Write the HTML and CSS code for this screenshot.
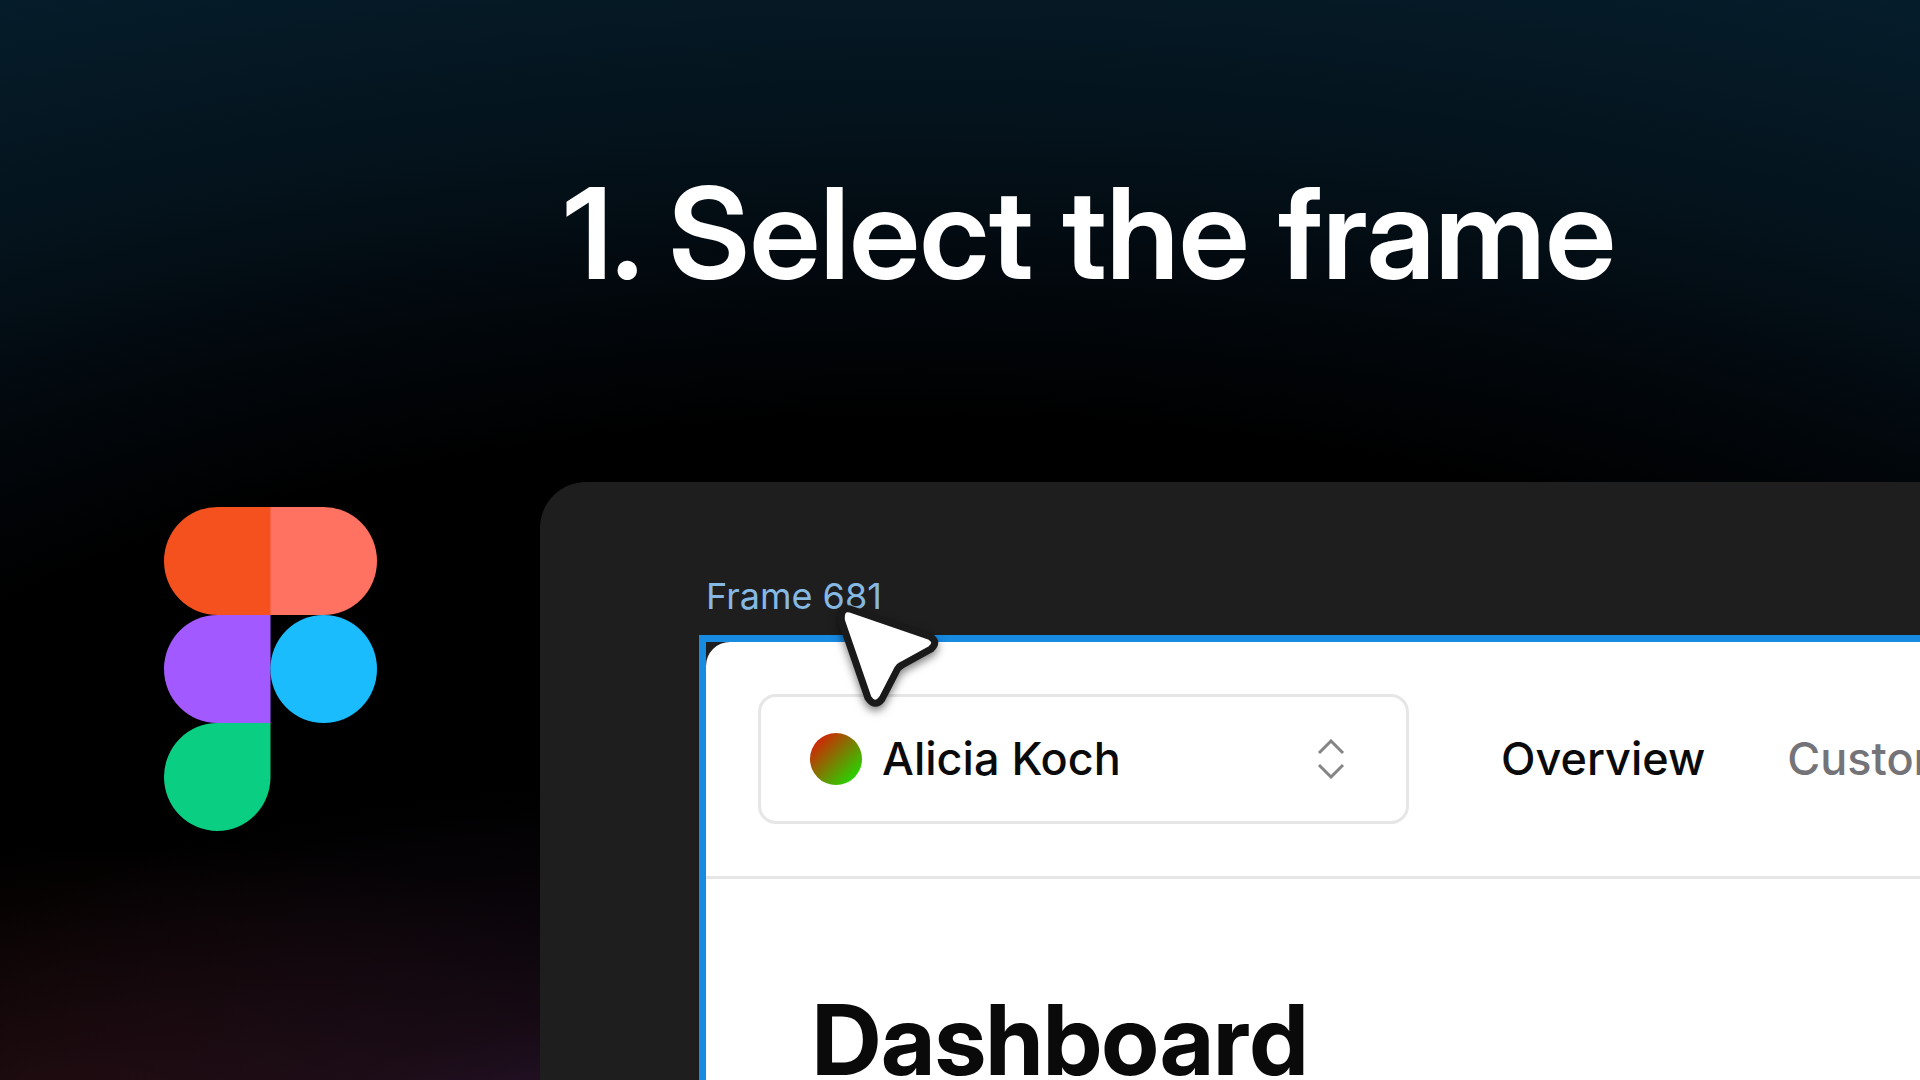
FILE: index.html
```html
<!DOCTYPE html>
<html lang="en">
<head>
  <meta charset="utf-8">
  <meta name="viewport" content="width=device-width, initial-scale=1">
  <title>1. Select the frame</title>
  <link rel="stylesheet" href="styles.css">
</head>
<body>
  <main class="slide">
    <h1 class="slide-title">1. Select the frame</h1>

    <svg class="logo" viewBox="0 0 213 324" role="img" aria-label="Figma">
      <path fill="#f4511e" d="M53.500 0H107V108H53.500A53.500 54 0 0 1 53.500 0Z"/>
      <path fill="#ff7262" d="M106.500 0H159.500A53.500 54 0 0 1 159.500 108H106.500Z"/>
      <path fill="#a259ff" d="M53.500 108H106.500V216H53.500A53.500 54 0 0 1 53.500 108Z"/>
      <ellipse fill="#1abcfe" cx="159.700" cy="162" rx="53.300" ry="54"/>
      <path fill="#0acf83" d="M53.500 216H106.500V270A53.250 54 0 1 1 53.500 216Z"/>
    </svg>

    <section class="canvas">
      <p class="frame-name">Frame 681</p>
      <div class="selection">
        <div class="app">
          <header class="app-bar">
            <div class="switcher">
              <select class="switcher-select" aria-label="Account">
                <option>Alicia Koch</option>
              </select>
              <span class="avatar"></span>
              <svg class="chevrons" viewBox="0 0 28 40" aria-hidden="true">
                <path d="M2 14 14 2 26 14M2 26 14 38 26 26"/>
              </svg>
            </div>
            <nav class="app-nav">
              <a class="nav-link nav-link-active" href="#overview">Overview</a>
              <a class="nav-link" href="#customers">Customers</a>
            </nav>
          </header>
          <h2 class="app-title">Dashboard</h2>
        </div>
        <svg class="pointer" viewBox="0 0 120 120" aria-hidden="true">
          <path d="M17 5 97 32.500Q106 38 98 45L69 61Q66 62.500 64.500 65L49 95Q42 104 35 94L8.500 17Q7 3 17 5Z"/>
        </svg>
      </div>
    </section>
  </main>
</body>
</html>
```
FILE: styles.css
```css
* {
  box-sizing: border-box;
}

body {
  margin: 0;
  background: #000;
  font-family: Inter, "Liberation Sans", sans-serif;
}

.slide {
  display: grid;
  grid-template-columns: 540px minmax(0, 1fr);
  grid-template-rows: auto 1fr;
  height: 100vh;
  overflow: hidden;
  background:
    radial-gradient(ellipse 900px 420px at 660px 1200px, #321a3e 0%, #22112480 45%, transparent 100%),
    radial-gradient(ellipse 700px 360px at 120px 1200px, #2a0e0e 0%, transparent 100%),
    radial-gradient(ellipse 2200px 1100px at 920px 1080px, #000 60%, #02070c 72%, #04121b 86%, #051a27 102%, #06202f 116%);
}

.slide-title {
  grid-column: 2;
  margin: 0;
  padding: 153px 0 169px 24px;
  color: #fff;
  font-family: "Inter Display", Inter, "Liberation Sans", sans-serif;
  font-size: 127px;
  font-variation-settings: "opsz" 32;
  font-weight: 600;
  line-height: 160px;
  white-space: nowrap;
}

.logo {
  width: 213px;
  height: 324px;
  margin: 25px 0 0 164px;
}

.canvas {
  padding: 90px 0 0 159px;
  border-top-left-radius: 46px;
  background: #1e1e1e;
}

.frame-name {
  margin: 0;
  padding: 0 0 15px 7px;
  color: #85b9e3;
  font-size: 36px;
  line-height: 48px;
}

.selection {
  position: relative;
  height: 100%;
  border: solid #178ae2;
  border-width: 7px 0 0 7px;
}

.app {
  height: 100%;
  border-top-left-radius: 24px;
  background: #fff;
  color: #0a0a0b;
}

.app-bar {
  display: flex;
  align-items: center;
  gap: 92px;
  padding: 52px 0 52px 52px;
  border-bottom: 3px solid #e6e6e7;
}

.switcher {
  display: grid;
  flex: none;
  align-items: center;
  width: 651px;
}

.switcher > * {
  grid-area: 1 / 1;
}

.switcher-select {
  width: 100%;
  height: 130px;
  padding: 0 120px 0 121px;
  border: 3px solid #e6e6e7;
  border-radius: 18px;
  appearance: none;
  background: #fff;
  color: inherit;
  font: 500 45px/56px Inter, "Liberation Sans", sans-serif;
}

.avatar {
  width: 52px;
  height: 52px;
  margin-left: 52px;
  border-radius: 50%;
  background: linear-gradient(135deg, #d81e05 10%, #1fdc00 90%);
  pointer-events: none;
}

.chevrons {
  justify-self: end;
  width: 28px;
  height: 40px;
  margin-right: 64px;
  fill: none;
  stroke: #858587;
  stroke-width: 3;
  pointer-events: none;
}

.app-nav {
  display: flex;
  gap: 82px;
}

.nav-link {
  color: #747478;
  font-size: 45px;
  font-weight: 500;
  line-height: 56px;
  text-decoration: none;
}

.nav-link-active {
  color: #0a0a0b;
}

.app-title {
  margin: 0;
  padding: 101px 0 0 106px;
  font-family: "Inter Display", Inter, "Liberation Sans", sans-serif;
  font-size: 98px;
  font-variation-settings: "opsz" 32;
  font-weight: 700;
  line-height: 120px;
}

.pointer {
  position: absolute;
  top: -38px;
  left: 127px;
  width: 120px;
  height: 120px;
  fill: #fff;
  stroke: #1a1a1a;
  stroke-width: 7;
  stroke-linejoin: round;
  filter: drop-shadow(0 4px 4px #00000080);
}
```
